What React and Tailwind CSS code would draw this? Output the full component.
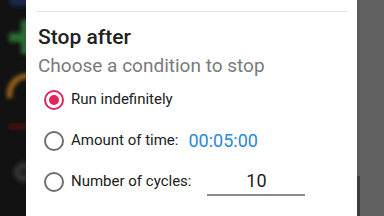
import React from "react";

function LeftStrip() {
  return (
    <div className="w-[26px] h-full bg-[#121212] shrink-0 overflow-hidden">
      <svg width="26" height="216" viewBox="0 0 26 216">
        <defs>
          <filter id="b" x="-50%" y="-50%" width="200%" height="200%">
            <feGaussianBlur stdDeviation="2" />
          </filter>
        </defs>
        <g filter="url(#b)">
          <rect x="10" y="-4" width="18" height="10" fill="#1a2550" />
          <rect x="21" y="20" width="8" height="34" fill="#2a6e32" />
          <rect x="9" y="33" width="20" height="9" fill="#2a6e32" />
          <path d="M10 98 A 18 18 0 0 1 28 76" stroke="#a56d1d" strokeWidth="5" fill="none" />
          <rect x="9" y="124" width="20" height="5" fill="#4a1616" />
          <circle cx="24" cy="172" r="10" fill="#353535" />
          <circle cx="24" cy="172" r="4" fill="#1a1a1a" />
        </g>
      </svg>
    </div>
  );
}

function Radio({ checked }) {
  return (
    <div
      className={
        "w-[20px] h-[20px] rounded-full border-2 flex items-center justify-center shrink-0 " +
        (checked ? "border-[#e2245f]" : "border-[#6f6f6f]")
      }
    >
      {checked && <div className="w-[10px] h-[10px] rounded-full bg-[#e2245f]" />}
    </div>
  );
}

export default function App() {
  return (
    <div
      className="w-[384px] h-[216px] flex overflow-hidden bg-[#121212]"
      style={{ fontFamily: "Roboto, 'Noto Sans', sans-serif" }}
    >
      <LeftStrip />
      <div className="w-[331px] h-full bg-white flex flex-col px-[10px] shrink-0">
        <div className="mt-[11px] h-px bg-[#e4e4e4]" />
        <div className="mt-[15px] pl-[2px] text-[21px] leading-none font-medium text-[#212121]">
          Stop after
        </div>
        <div className="mt-[8px] pl-[2px] text-[19px] leading-none text-[#7a7a7a]">
          Choose a condition to stop
        </div>
        <div className="mt-[4px] flex flex-col pl-[8px]">
          <div className="h-[41px] flex items-center">
            <Radio checked />
            <span className="ml-[7px] text-[15px] text-[#212121]">Run indefinitely</span>
          </div>
          <div className="h-[41px] flex items-center">
            <Radio />
            <span className="ml-[7px] text-[15px] text-[#212121]">Amount of time:</span>
            <span className="ml-[10px] text-[18px] text-[#2a88d8]">00:05:00</span>
          </div>
          <div className="h-[41px] flex items-center">
            <Radio />
            <span className="ml-[7px] text-[15px] text-[#212121]">Number of cycles:</span>
            <div className="ml-[16px] w-[98px] h-[29px] flex items-center justify-center border-b-2 border-[#8a8a8a]">
              <span className="text-[18px] text-[#212121] leading-none">10</span>
            </div>
          </div>
        </div>
      </div>
      <div className="flex-1 h-full bg-[#616161] flex">
        <div className="w-[3px] h-full flex flex-col">
          <div className="flex-1 bg-[#5c5c5c]" />
          <div className="h-[40px] bg-[#3e3e3e]" />
        </div>
      </div>
    </div>
  );
}
